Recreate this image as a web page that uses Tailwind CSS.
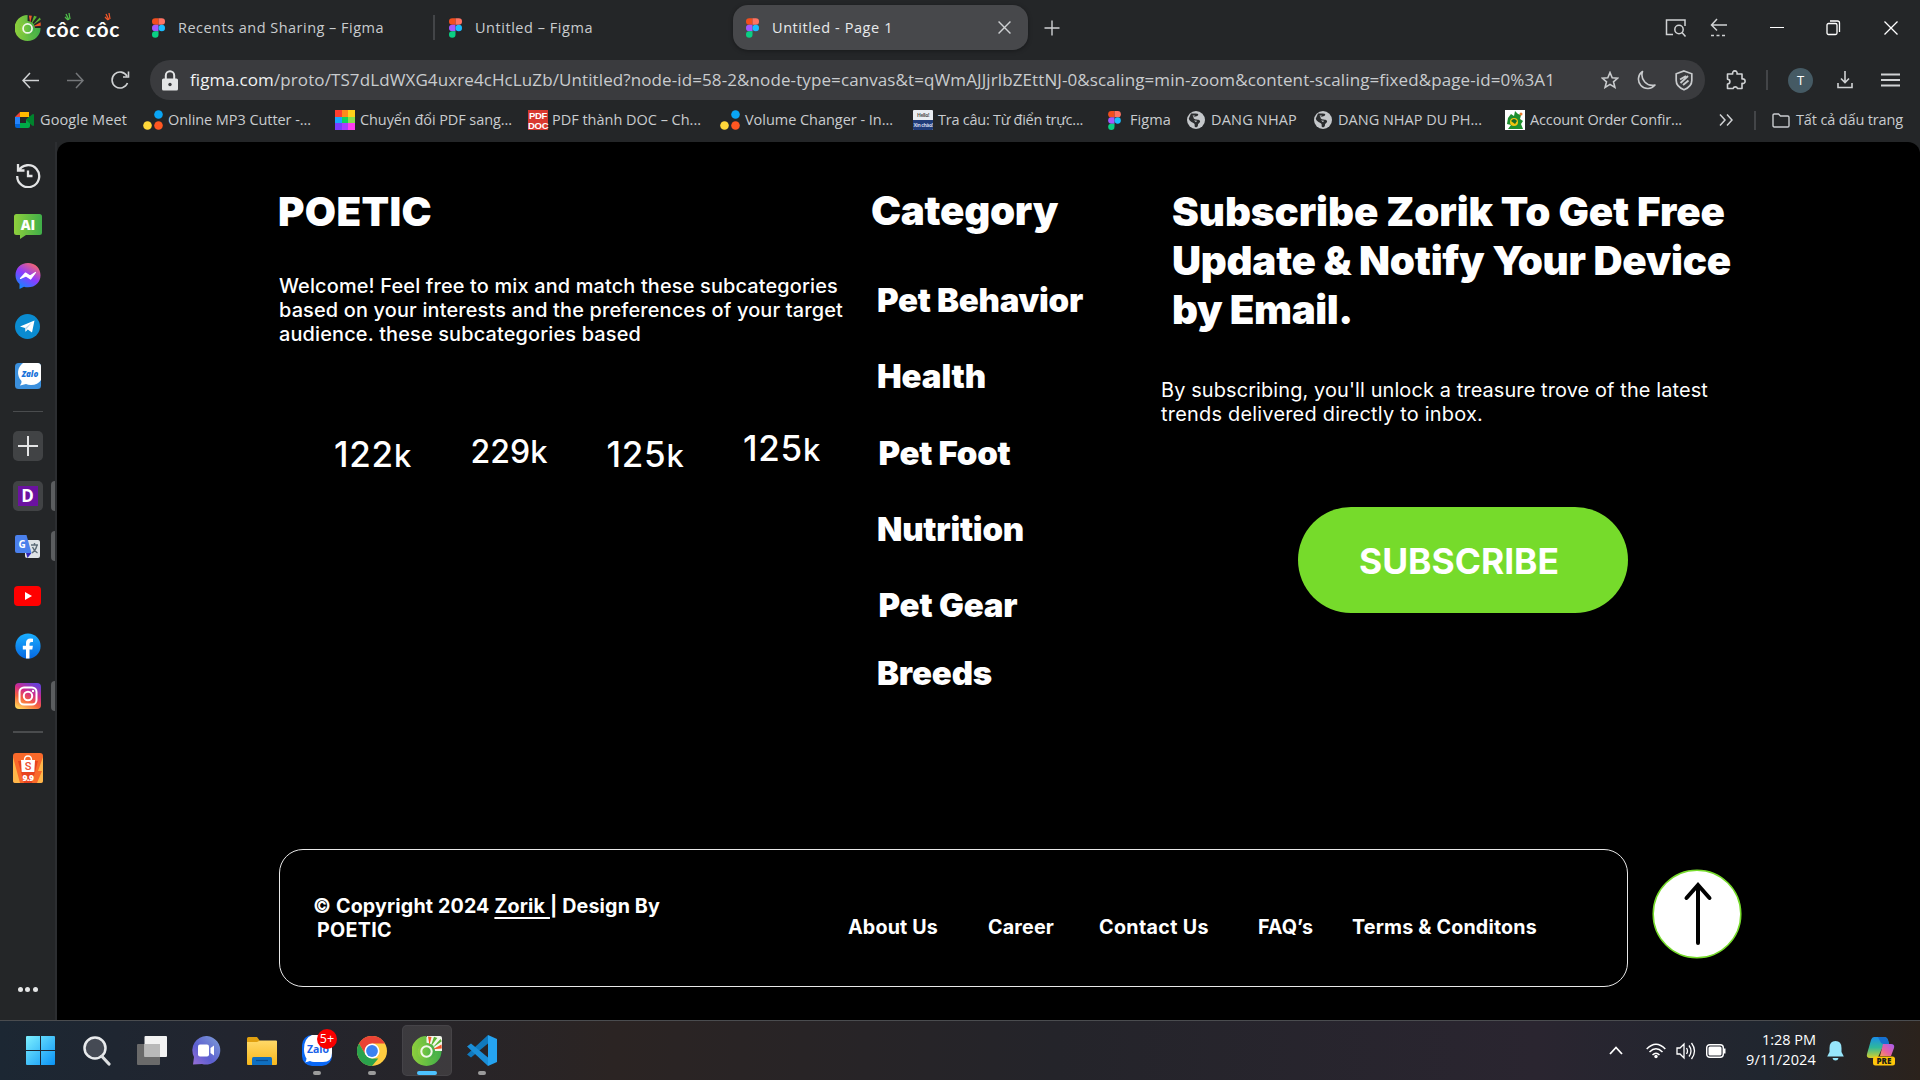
<!DOCTYPE html>
<html lang="vi">
<head>
<meta charset="utf-8">
<title>Untitled - Page 1</title>
<script src="https://cdn.jsdelivr.net/npm/@tailwindcss/browser@4"></script>
</head>
<body class="w-[1920px] h-[1080px] overflow-hidden bg-[#242628] font-['Open_Sans','Noto_Sans',sans-serif] text-[#c9cccf]">
<svg class="absolute w-0 h-0">
  <defs>
    <linearGradient id="gGreen" x1="0" y1="0" x2="1" y2="0"><stop offset="0" stop-color="#8fcf3c"/><stop offset="1" stop-color="#3fae49"/></linearGradient>
    <linearGradient id="gMsg" x1="0.2" y1="1" x2="0.8" y2="0"><stop offset="0" stop-color="#0a8bff"/><stop offset=".5" stop-color="#8c3bff"/><stop offset="1" stop-color="#ff6a64"/></linearGradient>
    <linearGradient id="gIg" x1="0.2" y1="1" x2="0.7" y2="0"><stop offset="0" stop-color="#ffd35a"/><stop offset=".35" stop-color="#f7643c"/><stop offset=".65" stop-color="#d12a8c"/><stop offset="1" stop-color="#6a3fd8"/></linearGradient>
    <linearGradient id="gFb" x1="0" y1="0" x2="0" y2="1"><stop offset="0" stop-color="#1aafff"/><stop offset="1" stop-color="#0668e2"/></linearGradient>
    <linearGradient id="gWin" x1="0" y1="0" x2="1" y2="1"><stop offset="0" stop-color="#7df0ff"/><stop offset="1" stop-color="#0a93f5"/></linearGradient>
    <linearGradient id="gChat" x1="0" y1="1" x2="1" y2="0"><stop offset="0" stop-color="#9a6fd8"/><stop offset=".4" stop-color="#5c5fd0"/><stop offset="1" stop-color="#7fa0d8"/></linearGradient>
    <linearGradient id="gFold" x1="0" y1="0" x2="0" y2="1"><stop offset="0" stop-color="#ffd968"/><stop offset="1" stop-color="#f7b71c"/></linearGradient>
    <linearGradient id="gCop" x1="0" y1="0" x2="0" y2="1"><stop offset="0" stop-color="#1a8de8"/><stop offset=".5" stop-color="#2fb89a"/><stop offset="1" stop-color="#d7cf2a"/></linearGradient>
    <linearGradient id="gCop2" x1="1" y1="0" x2="0" y2="1"><stop offset="0" stop-color="#a35df2"/><stop offset=".6" stop-color="#e8619f"/><stop offset="1" stop-color="#f79a5a"/></linearGradient>
    <symbol id="figma" viewBox="0 0 12 18"><path fill="#f24e1e" d="M3 0h3v6H3a3 3 0 0 1 0-6z"/><path fill="#ff7262" d="M6 0h3a3 3 0 0 1 0 6H6z"/><path fill="#a259ff" d="M3 6h3v6H3a3 3 0 0 1 0-6z"/><circle fill="#1abcfe" cx="9" cy="9" r="3"/><path fill="#0acf83" d="M3 12h3v3a3 3 0 1 1-3-3z"/></symbol>
    <symbol id="coccoc" viewBox="0 0 30 30"><path fill="url(#gGreen)" d="M14.500 0A15 15 0 1 0 29.500 15L22.500 15A8 8 0 1 1 14.500 7.500z"/><circle cx="14.500" cy="15.500" r="8.700" fill="url(#gGreen)"/><circle cx="14.500" cy="15.500" r="5.200" fill="none" stroke="#f2f7ea" stroke-width="2"/><path fill="#f0572a" d="M16 .5l3.500.5-2 8zM29.500 8.500l.3 4-9 .7z"/><path fill="#5cb531" d="M22 .8l3.300 1.200L18.500 11zM28.500 3l1.300 2.200-9.800 7z"/></symbol>
    <symbol id="dots3" viewBox="0 0 20 20"><circle cx="15.500" cy="4.500" r="4.300" fill="#0aa5f5"/><circle cx="4.500" cy="15.500" r="4.300" fill="#ffd83a"/><circle cx="15.500" cy="15.500" r="4.300" fill="#ff5722"/></symbol>
    <symbol id="globe" viewBox="0 0 18 18"><circle cx="9" cy="9" r="9" fill="#c4c7ca"/><path d="M4 2.500c3 0 6-.5 7 .5s-1 2.500-3 2.500-2 1.500-.5 2.500 5 0 5.500 2-2 2-2 4-1.500 2.500-2.500 2.300c-1.500-.3-.5-2-1-3.300S2 10.500 1.800 7.500z" fill="#2b2d2f"/><path d="M5.500 4.500h2.500l-1.500 1.500zM7 9.500l3 .2-1 1.500z" fill="#c4c7ca"/></symbol>
  </defs>
</svg>

<!-- Tab strip -->
<header class="h-[142px] flex flex-col">
  <div class="h-[55px] flex items-center pl-[15px] text-[14.5px]">
    <svg class="w-[26px] h-[26px] shrink-0"><use href="#coccoc"/></svg>
    <div class="relative ml-[5px] w-[75px] font-['Lato',sans-serif] font-bold text-[21px] leading-[26px] text-white whitespace-nowrap pt-[2px]"><span data-w="74">côc côc</span>
      <svg class="absolute left-[18px] -top-[1px] w-[50px] h-[8px] overflow-visible" viewBox="0 0 50 8"><path d="M2 1l3 6M5 0l1 6M1 4l3 3" stroke="#4fbf4a" stroke-width="1.300"/><path d="M42 1l3 6M45 0l1 6M41 4l3 3" stroke="#f0572a" stroke-width="1.300"/></svg>
    </div>
    <svg class="w-[13px] h-[20px] ml-[31px] shrink-0"><use href="#figma"/></svg>
    <span class="ml-[13px] w-[255px] whitespace-nowrap"><span data-w="206">Recents and Sharing – Figma</span></span>
    <i class="w-[2px] h-[25px] bg-[#434548]"></i>
    <svg class="w-[13px] h-[20px] ml-[14px] shrink-0"><use href="#figma"/></svg>
    <span class="ml-[13px] w-[258px] whitespace-nowrap"><span data-w="118">Untitled – Figma</span></span>
    <div class="w-[295px] h-[45px] rounded-[15px] bg-[#47484b] shadow-[0_1px_4px_rgba(0,0,0,.35)] flex items-center pl-[13px] text-[#e8eaec]">
      <svg class="w-[13px] h-[20px] shrink-0"><use href="#figma"/></svg>
      <span class="ml-[13px] w-[226px] whitespace-nowrap"><span data-w="121">Untitled - Page 1</span></span>
      <svg class="w-[13px] h-[13px] overflow-visible" viewBox="0 0 12 12"><path d="M.5.500l11 11M11.500.500l-11 11" stroke="#cfd1d3" stroke-width="1.300"/></svg>
    </div>
    <svg class="w-[16px] h-[16px] ml-[16px]" viewBox="0 0 16 16"><path d="M8 .5v15M.5 8h15" stroke="#cfd1d3" stroke-width="1.400"/></svg>
    <svg class="w-[22px] h-[20px] ml-[605px]" viewBox="0 0 22 20" fill="none" stroke="#d0d2d4" stroke-width="1.500"><path d="M8 16.500H1.500V2h18.500v6"/><circle cx="14" cy="11.500" r="4.200"/><path d="M17 14.500l3.500 4"/></svg>
    <svg class="w-[18px] h-[20px] ml-[23px]" viewBox="0 0 18 20" fill="none" stroke="#d0d2d4" stroke-width="1.500"><path d="M7 1L1.500 7 7 12.500M2 7h15"/><path d="M1 17.500h16" stroke-dasharray="3 2.500"/></svg>
    <i class="w-[14px] h-[1.500px] bg-white ml-[42px]"></i>
    <svg class="w-[15px] h-[16px] ml-[42px]" viewBox="0 0 15 16" fill="none" stroke="#fff" stroke-width="1.300"><rect x="1" y="3.500" width="10" height="11" rx="1.500"/><path d="M4 1h7.500q2 0 2 2v9"/></svg>
    <svg class="w-[14px] h-[14px] ml-[43px]" viewBox="0 0 14 14"><path d="M.5.500l13 13M13.500.500l-13 13" stroke="#fff" stroke-width="1.300"/></svg>
  </div>

  <!-- Navigation and address -->
  <div class="h-[50px] flex items-center pl-[22px]">
    <svg class="w-[17px] h-[17px]" viewBox="0 0 17 17" fill="none" stroke="#d0d2d4" stroke-width="1.500"><path d="M8 1L1 8.500 8 16M1 8.500h16"/></svg>
    <svg class="w-[17px] h-[17px] ml-[28px]" viewBox="0 0 17 17" fill="none" stroke="#75777a" stroke-width="1.500"><path d="M9 1l7 7.500L9 16M16 8.500H0"/></svg>
    <svg class="w-[20px] h-[20px] ml-[26px]" viewBox="0 0 20 20" fill="none" stroke="#d0d2d4" stroke-width="1.600"><path d="M17.500 13A8 8 0 1 1 17 6M18.500 1.500v5.500H13"/></svg>
    <div class="ml-[20px] w-[1555px] h-[40px] rounded-[20px] bg-[#3a3b3e] flex items-center pl-[11px]">
      <svg class="w-[18px] h-[21px]" viewBox="0 0 18 21"><path d="M4.800 9V5.500a4.200 4.200 0 0 1 8.400 0V9" fill="none" stroke="#e4e5e6" stroke-width="2"/><rect x="1" y="8.500" width="16" height="12" rx="1.500" fill="#e4e5e6"/><circle cx="9" cy="14.500" r="1.700" fill="#3a3b3e"/></svg>
      <span class="ml-[11px] w-[1415px] whitespace-nowrap text-[17px]"><span data-w="1365"><span class="text-[#f1f3f4]">figma.com</span>/proto/TS7dLdWXG4uxre4cHcLuZb/Untitled?node-id=58-2&amp;node-type=canvas&amp;t=qWmAJJjrlbZEttNJ-0&amp;scaling=min-zoom&amp;content-scaling=fixed&amp;page-id=0%3A1</span></span>
      <svg class="w-[18px] h-[18px] -ml-[4px]" viewBox="0 0 18 18" fill="none" stroke="#c9cbcd" stroke-width="1.600"><path d="M9 1.500l2.200 5.200 5.600.4-4.300 3.700 1.400 5.600L9 13.400l-4.900 3 1.400-5.600L1.200 7.100l5.600-.4z"/></svg>
      <svg class="w-[20px] h-[20px] ml-[17px]" viewBox="0 0 20 20" fill="none" stroke="#c9cbcd" stroke-width="1.600"><path d="M6.500 1.500A9.300 9.300 0 1 0 19 15 10.500 10.500 0 0 1 6.500 1.500z" stroke-linejoin="round"/></svg>
      <svg class="w-[18px] h-[21px] ml-[19px]" viewBox="0 0 18 21" fill="none" stroke="#c9cbcd" stroke-width="1.700"><path d="M9 1l7.800 2.800v6.700c0 4.500-3.500 7.500-7.800 9.300-4.300-1.800-7.800-4.800-7.800-9.300V3.800z"/><path d="M5 9.500l6-3.500M5.500 13L13 6M8 15l5.500-4.500" stroke-width="1.900"/></svg>
    </div>
    <svg class="w-[20px] h-[20px] ml-[21px]" viewBox="0 0 20 20" fill="none" stroke="#d0d2d4" stroke-width="1.600" stroke-linejoin="round"><path d="M1.500 4h5.200a2.300 2.300 0 1 1 4.300 0H16v5a2.300 2.300 0 1 1 0 4.300v5.200h-4.500a2.300 2.300 0 0 0-4.400 0H1.500V14a2.300 2.300 0 0 0 0-4.800z"/></svg>
    <i class="w-[2px] h-[20px] bg-[#434548] ml-[20px]"></i>
    <div class="w-[25px] h-[25px] rounded-full bg-[#455a64] ml-[20px] flex items-center justify-center text-white text-[13px] leading-none">T</div>
    <svg class="w-[16px] h-[18px] ml-[24px]" viewBox="0 0 16 18" fill="none" stroke="#d0d2d4" stroke-width="1.600"><path d="M8 0v11.500M4 7.500L8 11.500l4-4M1 12v4.500h14V12"/></svg>
    <svg class="w-[19px] h-[14px] ml-[28px]" viewBox="0 0 19 14"><path d="M0 1.500h19M0 7h19M0 12.500h19" stroke="#d0d2d4" stroke-width="2"/></svg>
  </div>

  <!-- Bookmarks -->
  <nav class="h-[30px] flex items-center pl-[15px] text-[14.5px] whitespace-nowrap">
    <svg class="w-[20px] h-[16px] shrink-0" viewBox="0 0 20 16"><path d="M5 0h9v5h-9z" fill="#ffba00"/><path d="M5 0v5H0z" fill="#ea4335"/><path d="M0 5h5v7H0z" fill="#2684fc"/><path d="M0 12h5v4H2q-2 0-2-2z" fill="#0066da"/><path d="M5 11h6V8l4-4v10q0 2-2 2H5z" fill="#00ac47"/><path d="M11 8l6-5.500q2-1 2 .5v10q0 1.500-2 .500z" fill="#00832d"/></svg>
    <span class="ml-[5px] w-[103px]"><span data-w="87">Google Meet</span></span>
    <svg class="w-[20px] h-[20px] shrink-0"><use href="#dots3"/></svg>
    <span class="ml-[5px] w-[167px]"><span data-w="143">Online MP3 Cutter -...</span></span>
    <div class="w-[20px] h-[20px] shrink-0 grid grid-cols-3 grid-rows-3"><i class="bg-[#ff3d2e]"></i><i class="bg-[#ff8a1a]"></i><i class="bg-[#ffd21a]"></i><i class="bg-[#1aa7ff]"></i><i class="bg-[#13d35a]"></i><i class="bg-[#8be04a]"></i><i class="bg-[#7a3dff]"></i><i class="bg-[#a93dff]"></i><i class="bg-[#ff3df0]"></i></div>
    <span class="ml-[5px] w-[168px]"><span data-w="152">Chuyển đổi PDF sang...</span></span>
    <div class="w-[20px] h-[20px] shrink-0 bg-[#d8392f] text-white font-bold font-['Liberation_Sans'] text-[9.500px] leading-[9.500px] text-center tracking-[-0.3px] pt-[1px]">PDF<br>DOC</div>
    <span class="ml-[4px] w-[168px]"><span data-w="149">PDF thành DOC – Ch...</span></span>
    <svg class="w-[20px] h-[20px] shrink-0"><use href="#dots3"/></svg>
    <span class="ml-[5px] w-[168px]"><span data-w="148">Volume Changer - In...</span></span>
    <div class="w-[20px] h-[20px] shrink-0 overflow-hidden bg-[#e9edf2] rounded-[1px] flex flex-col text-center font-bold text-[5px] leading-[10px] tracking-[-0.4px]"><span class="text-[#555]">Hello!</span><span class="bg-[#203c78] text-[#cdd6ea]">Xin chào!</span></div>
    <span class="ml-[5px] w-[170px]"><span data-w="145">Tra câu: Từ điển trực...</span></span>
    <svg class="w-[13px] h-[19px] shrink-0"><use href="#figma"/></svg>
    <span class="ml-[9px] w-[57px]"><span data-w="41">Figma</span></span>
    <svg class="w-[18px] h-[18px] shrink-0"><use href="#globe"/></svg>
    <span class="ml-[6px] w-[103px]"><span data-w="86">DANG NHAP</span></span>
    <svg class="w-[18px] h-[18px] shrink-0"><use href="#globe"/></svg>
    <span class="ml-[6px] w-[167px]"><span data-w="144">DANG NHAP DU PH...</span></span>
    <svg class="w-[20px] h-[20px] shrink-0" viewBox="0 0 20 20"><path fill="#fff" d="M0 0h20v20H0z"/><path d="M3 8l3-4 3 2 1-5 3 3 3 1-1 4 3 2-2 3 2 5H3l3-4-4-1z" fill="#1e8f2e"/><circle cx="9" cy="12" r="4" fill="#f1c40f"/><path d="M6 11q3-4 6 0l-2 3z" fill="#17692a"/><circle cx="16" cy="4" r="1.500" fill="#e8792b"/></svg>
    <span class="ml-[5px] w-[189px]"><span data-w="152">Account Order Confir...</span></span>
    <svg class="w-[14px] h-[12px] shrink-0" viewBox="0 0 14 12"><path d="M1 .5l5 5.500-5 5.500M8 .5l5 5.500-5 5.500" stroke="#d0d2d4" stroke-width="1.500" fill="none"/></svg>
    <i class="w-[2px] h-[19px] bg-[#434548] ml-[21px] shrink-0"></i>
    <svg class="w-[18px] h-[15px] ml-[16px] shrink-0" viewBox="0 0 18 15" fill="none" stroke="#c9cccf" stroke-width="1.400"><path d="M1 12.500V2.300Q1 1 2.300 1H6.500l2 2h7.200Q17 3 17 4.300v8.400Q17 14 15.700 14H2.300Q1 14 1 12.500z"/></svg>
    <span class="ml-[6px]"><span data-w="107">Tất cả dấu trang</span></span>
  </nav>
</header>

<div class="flex h-[878px]">
  <!-- Side panel -->
  <aside class="w-[57px] shrink-0 border-r-2 border-[#2c2e31] relative flex flex-col items-center pt-[8px]">
    <div class="h-[50px] flex items-center"><svg class="w-[26px] h-[26px]" viewBox="0 0 26 26" fill="none" stroke="#e3e4e5" stroke-width="2.300"><path d="M3.500 9A11 11 0 1 1 2.200 14M3 2v6.500h6.500M13 8.500V14h4.500"/></svg></div>
    <div class="h-[51px] flex items-center"><svg class="w-[28px] h-[26px]" viewBox="0 0 28 26"><path d="M2.500 1h23Q28 1 28 3.500v16q0 2.500-2.500 2.500H12l-6 4v-4H2.500Q0 22 0 19.500v-16Q0 1 2.500 1z" fill="url(#gGreen)"/><text x="14" y="16.500" text-anchor="middle" font-family="Open Sans" font-weight="800" font-size="13.500" fill="#fff">AI</text></svg></div>
    <div class="h-[50px] flex items-center"><svg class="w-[26px] h-[26px]" viewBox="0 0 26 26"><path d="M13 0C5.500 0 .5 5.300.5 12.300c0 3.700 1.500 6.500 4 8.700V26l4.500-2.200c1.200.4 2.500.5 4 .5 7.500 0 12.500-5.300 12.500-12.100S20.500 0 13 0z" fill="url(#gMsg)"/><path d="M5.500 15.500l5-5.500 4.500 3 5.500-3.500-4.800 6.500-4.700-3z" fill="#fff" stroke="#fff" stroke-width="1.200" stroke-linejoin="round"/></svg></div>
    <div class="h-[50px] flex items-center"><svg class="w-[25px] h-[25px]" viewBox="0 0 25 25"><circle cx="12.500" cy="12.500" r="12.500" fill="#0a8bd0"/><path d="M5 12.500L19.500 6.500 17 18.500l-4.200-3-2.300 2.300-.5-3.800z" fill="#fff"/><path d="M10 14l7-5.500-5.500 6.500-1 2.800z" fill="#b7d6ea"/></svg></div>
    <div class="h-[50px] flex items-center"><svg class="w-[26px] h-[26px]" viewBox="0 0 26 26"><rect width="26" height="26" rx="3.500" fill="#3b8fdc"/><path d="M8 0h14.500Q26 0 26 3.500V17q-3 5-10 5-3 0-5-1l-6 1.500q2-2 1.500-4.500C1 12 2.500 4 8 0z" fill="#fff"/><text x="15" y="13.500" text-anchor="middle" font-family="Open Sans" font-weight="800" font-style="italic" font-size="8" fill="#1a73d9">Zalo</text></svg></div>
    <div class="h-[20px] flex items-center"><i class="w-[30px] h-px bg-[#4a4c4e]"></i></div>
    <div class="h-[50px] flex items-center"><div class="w-[30px] h-[30px] rounded-[5px] bg-[#414345] flex items-center justify-center"><svg class="w-[20px] h-[20px]" viewBox="0 0 20 20"><path d="M10 0v20M0 10h20" stroke="#e4e5e6" stroke-width="2"/></svg></div></div>
    <div class="h-[50px] flex items-center"><div class="w-[30px] h-[30px] rounded-[5px] bg-[#414345] flex items-center justify-center"><div class="w-[20px] h-[20px] bg-[#6b12a0] text-white font-bold text-[17px] leading-[20px] text-center">D</div></div></div>
    <div class="h-[50px] flex items-center"><svg class="w-[25px] h-[25px]" viewBox="0 0 25 25"><rect x="10" y="6" width="15" height="18" rx="2" fill="#dfe3e6"/><path d="M2 1h9.500l5 18H2Q0 19 0 17V3Q0 1 2 1z" fill="#4a80ec"/><path d="M11 19h5.500L12.500 24z" fill="#3427b8"/><path d="M16 11h7M19.500 9v2M22 11q-1 5-5 8M17.500 13q1.500 4 5 6" stroke="#5f6d78" stroke-width="1.400" fill="none"/><text x="7" y="13.500" text-anchor="middle" font-family="Open Sans" font-weight="700" font-size="10" fill="#fff">G</text></svg></div>
    <div class="h-[50px] flex items-center"><svg class="w-[27px] h-[20px]" viewBox="0 0 27 20"><rect width="27" height="20" rx="4" fill="#f00"/><path d="M11 6v8l7-4z" fill="#fff"/></svg></div>
    <div class="h-[50px] flex items-center"><svg class="w-[26px] h-[26px]" viewBox="0 0 26 26"><circle cx="13" cy="13" r="12.600" fill="url(#gFb)"/><path d="M11 25.500V16.500H7.800v-3.700H11V10q0-4.500 4.500-4.500 1.500 0 2.500.3v3.200h-1.500q-2 0-2 1.800v2h3.400l-.6 3.700h-2.800v9z" fill="#fff"/></svg></div>
    <div class="h-[50px] flex items-center"><svg class="w-[26px] h-[26px]" viewBox="0 0 26 26"><rect width="26" height="26" rx="4" fill="url(#gIg)"/><rect x="4.500" y="4.500" width="17" height="17" rx="4.500" fill="none" stroke="#fff" stroke-width="2"/><circle cx="13" cy="13" r="4.200" fill="none" stroke="#fff" stroke-width="2"/><circle cx="18" cy="8" r="1.200" fill="#fff"/></svg></div>
    <div class="h-[22px] flex items-center"><i class="w-[30px] h-[2px] bg-[#4a4c4e]"></i></div>
    <div class="h-[50px] flex items-center"><svg class="w-[30px] h-[30px]" viewBox="0 0 30 30"><rect width="30" height="30" rx="3" fill="#f9692a"/><path d="M0 4l7 26H2Q0 30 0 28zM30 4l-5 14h4l-5 12h4q2 0 2-2z" fill="#ffb64a"/><path d="M5 8h20l-6 22h-8z" fill="#e8431f"/><path d="M11.500 7q0-4 3.500-4t3.500 4" fill="none" stroke="#fff" stroke-width="1.400"/><path d="M8 7h14l-.7 12H8.700z" fill="#fff"/><text x="15" y="16.500" text-anchor="middle" font-family="Roboto" font-weight="500" font-size="11" fill="#ee4d2d">S</text><text x="15" y="27.500" text-anchor="middle" font-family="Open Sans" font-weight="800" font-size="8.500" letter-spacing="-.5" fill="#fff">9.9</text></svg></div>
    <div class="mt-auto h-[61px] flex items-center gap-[2.500px]"><i class="w-[5px] h-[5px] rounded-full bg-[#e4e5e6]"></i><i class="w-[5px] h-[5px] rounded-full bg-[#e4e5e6]"></i><i class="w-[5px] h-[5px] rounded-full bg-[#e4e5e6]"></i></div>
    <i class="absolute right-0 top-[339px] w-[4px] h-[30px] rounded-l-[4px] bg-[#5b5d5f]"></i>
    <i class="absolute right-0 top-[389px] w-[4px] h-[30px] rounded-l-[4px] bg-[#5b5d5f]"></i>
    <i class="absolute right-0 top-[539px] w-[4px] h-[30px] rounded-l-[4px] bg-[#5b5d5f]"></i>
  </aside>

  <!-- Page -->
  <main class="w-[1863px] bg-black rounded-t-[12px] font-['Inter',sans-serif] text-white pl-[222px] whitespace-nowrap">
    <div class="flex h-[707px]">
      <section class="w-[592px] pt-[46px]">
        <h2 class="font-black text-[40.3px] leading-[48.8px] -ml-[1px]"><span data-w="154">POETIC</span></h2>
        <p class="mt-[38.500px] font-medium text-[19.900px] leading-[23.9px]"><span data-w="559">Welcome! Feel free to mix and match these subcategories</span><br><span data-w="564">based on your interests and the preferences of your target</span><br><span data-w="362">audience. these subcategories based</span></p>
        <div class="flex pl-[55px] mt-[85.500px] font-medium text-[35px] leading-[40px]">
          <span class="w-[136.5px] pt-[1px]"><span data-w="78">122<span class="text-[31px]">k</span></span></span>
          <span class="w-[136px] -mt-[1px] text-[32px]"><span data-w="77">229<span class="text-[31px]">k</span></span></span>
          <span class="w-[136.5px] pt-[1px]"><span data-w="78">125<span class="text-[31px]">k</span></span></span>
          <span class="-mt-[5px]"><span data-w="78">125<span class="text-[31px]">k</span></span></span>
        </div>
      </section>
      <section class="w-[290px] pt-[45px] font-black">
        <h2 class="text-[40.3px] leading-[48.8px]"><span data-w="187">Category</span></h2>
        <ul class="mt-[44.5px] pl-[6px] text-[33px] leading-[40px]">
          <li class="h-[76.2px]"><span data-w="206">Pet Behavior</span></li>
          <li class="h-[76.2px]"><span data-w="109">Health</span></li>
          <li class="h-[76.2px] pl-[1.500px]"><span data-w="132">Pet Foot</span></li>
          <li class="h-[76.2px]"><span data-w="147">Nutrition</span></li>
          <li class="h-[68px] pl-[1.500px]"><span data-w="139">Pet Gear</span></li>
          <li><span data-w="115">Breeds</span></li>
        </ul>
      </section>
      <section class="pt-[46px]">
        <h2 class="pl-[11px] font-black text-[40.3px] leading-[48.8px]"><span data-w="553">Subscribe Zorik To Get Free</span><br><span data-w="559">Update &amp; Notify Your Device</span><br><span data-w="181">by Email.</span></h2>
        <p class="mt-[45px] text-[19.900px] leading-[23.9px]"><span data-w="547">By subscribing, you'll unlock a treasure trove of the latest</span><br><span data-w="322">trends delivered directly to inbox.</span></p>
        <button class="block ml-[137px] mt-[79.500px] w-[330px] h-[106px] rounded-[53px] bg-[#76db2b] pr-[8px] pt-[3px] font-bold text-[35.400px]"><span data-w="200">SUBSCRIBE</span></button>
      </section>
    </div>
    <footer class="flex items-center">
      <div class="w-[1349px] h-[138px] border-[1.500px] border-[#e8e8e8] rounded-[24px] flex pl-[33px] font-bold text-[19.7px] leading-[23.9px]">
        <p class="w-[535px] pt-[45px]"><span data-w="347">© Copyright 2024 <span class="underline underline-offset-4 decoration-2">Zorik </span>| Design By</span><br><span class="inline-block pl-[4px]"><span data-w="75">POETIC</span></span></p>
        <nav class="flex pt-[65.5px]"><a class="w-[140px]"><span data-w="90">About Us</span></a><a class="w-[111px]"><span data-w="66">Career</span></a><a class="w-[159px]"><span data-w="110">Contact Us</span></a><a class="w-[94px]"><span data-w="55">FAQ’s</span></a><a><span data-w="185">Terms &amp; Conditons</span></a></nav>
      </div>
      <svg class="ml-[24px] w-[90px] h-[90px] -mt-[8px]" viewBox="0 0 90 90"><circle cx="45" cy="45" r="43.800" fill="#fff" stroke="#76db2b" stroke-width="1.500"/><path d="M46 74V17M34.500 29L46 16l11.500 13" fill="none" stroke="#000" stroke-width="4" stroke-linecap="round"/></svg>
    </footer>
  </main>
</div>

<!-- Taskbar -->
<div class="h-[60px] border-t border-[#4a4c4f] bg-[linear-gradient(90deg,#1c2733_0%,#22252f_12%,#2b2423_32%,#24242a_55%,#2a2530_80%,#20262f_92%,#2b221c_100%)] flex items-center pl-[14px] relative">
  <div class="flex">
    <div class="w-[55px] h-[50px] pr-[2px] flex items-center justify-center"><svg class="w-[29px] h-[29px]" viewBox="0 0 29 29"><path d="M1 0h13v14H0V1Q0 0 1 0zM15 0h13q1 0 1 1v13H15zM0 15h14v14H1q-1 0-1-1zM15 15h14v13q0 1-1 1H15z" fill="url(#gWin)"/></svg></div>
    <div class="w-[55px] h-[50px] flex items-center justify-center"><svg class="w-[28px] h-[30px]" viewBox="0 0 28 30"><circle cx="12" cy="12" r="10.500" fill="#454a54" stroke="#e9ebed" stroke-width="2.500"/><path d="M19 20.500l7 7.500" stroke="#dcdee0" stroke-width="3.200" stroke-linecap="round"/></svg></div>
    <div class="w-[55px] h-[50px] flex items-center justify-center"><svg class="w-[30px] h-[29px]" viewBox="0 0 30 29"><rect y="8" width="23" height="21" rx="1" fill="#6a6a6a"/><rect x="7.500" width="22.500" height="21" rx="1" fill="#f2f2f2"/><path d="M7.500 8H23v13H7.500z" fill="#b9b9b9"/></svg></div>
    <div class="w-[55px] h-[50px] flex items-center justify-center"><svg class="w-[29px] h-[29px]" viewBox="0 0 29 29"><path d="M15 0a14.300 14.300 0 1 1-5 28L1 28.500 2 21A14.300 14.300 0 0 1 15 0z" fill="url(#gChat)"/><rect x="6" y="8.500" width="11" height="12" rx="2" fill="#fff"/><path d="M18.500 12l3.500-2.500v10l-3.500-2.500z" fill="#fff"/></svg></div>
    <div class="w-[55px] h-[50px] flex items-center justify-center"><svg class="w-[30px] h-[28px]" viewBox="0 0 30 28"><path d="M0 1.500Q0 0 1.500 0H10l3 4H30v6H0z" fill="#e0a010"/><path d="M0 5h10l3-1.500h16q1 0 1 1V27q0 1-1 1H1q-1 0-1-1z" fill="url(#gFold)"/><path d="M5 28v-6.500Q5 20 6.500 20h17q1.500 0 1.500 1.500V28z" fill="#0f6fc0"/><path d="M9 23.500h12" stroke="#0a4c8c" stroke-width="1.200"/></svg></div>
    <div class="w-[55px] h-[50px] flex items-center justify-center relative"><svg class="w-[30px] h-[31px]" viewBox="0 0 30 31"><rect width="30" height="31" rx="10" fill="#0a68f5"/><path d="M10 0h10q10 0 10 10v8q0 9-9 9H12q-2 0-4-1l-5 1.500q1.500-2 1.500-4Q2 20 2 14 2 3 10 0z" fill="#fff"/><text x="16" y="17.500" text-anchor="middle" font-family="Open Sans" font-weight="700" font-size="10.500" fill="#1a62e8">Zalo</text></svg><b class="absolute left-[28px] top-[3px] w-[20px] h-[20px] rounded-full bg-[#f90000] text-white text-[12.500px] leading-[20px] text-center font-normal">5+</b><i class="absolute bottom-[1px] w-[8px] h-[4px] rounded-full bg-[#9b9b9b]"></i></div>
    <div class="w-[55px] h-[50px] flex items-center justify-center relative"><svg class="w-[30px] h-[30px]" viewBox="0 0 30 30"><circle cx="15" cy="15" r="15" fill="#ffcd40"/><path d="M2 7.500A15 15 0 0 1 28 7.500H15L8.500 18.700z" fill="#ea4335"/><path d="M2 7.500L8.600 18.800 15 22.500h6.300L15 30A15 15 0 0 1 2 7.500z" fill="#2ba24c"/><circle cx="15" cy="15" r="7.500" fill="#fff"/><circle cx="15" cy="15" r="5.900" fill="#3b82f0"/></svg><i class="absolute bottom-[1px] w-[8px] h-[4px] rounded-full bg-[#9b9b9b]"></i></div>
    <div class="w-[55px] h-[50px] flex items-center justify-center relative"><div class="w-[50px] h-[51px] shrink-0 rounded-[5px] bg-white/10 border border-white/5 flex items-center justify-center"><svg class="w-[30px] h-[30px]"><circle cx="14.500" cy="15" r="14" fill="#f3f6ec"/><path d="M15 0h13q2 0 2 2v13H15z" fill="#f3f6ec"/><use href="#coccoc"/></svg></div><i class="absolute bottom-[1px] w-[20px] h-[4px] rounded-full bg-[#4cc2ff]"></i></div>
    <div class="w-[55px] h-[50px] flex items-center justify-center relative"><svg class="w-[30px] h-[31px]" viewBox="0 0 30 31"><path d="M21 0l9 4v23l-9 4z" fill="#25a3f0"/><path d="M21 0v8.500L4 22.500 0 19.500z" fill="#1079bd"/><path d="M21 31v-8.500L4 8.500 0 11.500z" fill="#1b8fd8"/></svg><i class="absolute bottom-[1px] w-[8px] h-[4px] rounded-full bg-[#9b9b9b]"></i></div>
  </div>
  <svg class="w-[14px] h-[9px] ml-[1100px]" viewBox="0 0 14 9"><path d="M1 8l6-6.500L13 8" fill="none" stroke="#fff" stroke-width="1.800"/></svg>
  <svg class="w-[20px] h-[16px] ml-[23px]" viewBox="0 0 20 16" fill="none" stroke="#fff" stroke-width="1.500"><path d="M.7 6Q10-3.500 19.300 6M3.500 9Q10 2.500 16.500 9M6.500 12Q10 8.500 13.500 12"/><circle cx="10" cy="13.500" r="1.700" fill="#fff" stroke="none"/></svg>
  <svg class="w-[20px] h-[18px] ml-[10px]" viewBox="0 0 20 18" fill="none" stroke="#fff" stroke-width="1.300"><path d="M1 6h3l4-4v14l-4-4H1zM10.500 6q2 3 0 6M13 3.500q4 5.500 0 11M15.500 1q6 8 0 16"/></svg>
  <svg class="w-[20px] h-[14px] ml-[10px]" viewBox="0 0 20 14"><rect x=".7" y=".7" width="16.600" height="12.600" rx="3" fill="none" stroke="#fff" stroke-width="1.400"/><rect x="2.500" y="2.500" width="13" height="9" rx="1.500" fill="#fff"/><path d="M18.500 4.500v5" stroke="#fff" stroke-width="2"/></svg>
  <div class="ml-[20px] w-[70px] text-right text-white text-[14.500px] leading-[20px] whitespace-nowrap -mt-[2px]"><span data-w="54">1:28 PM</span><br><span data-w="70">9/11/2024</span></div>
  <svg class="w-[17px] h-[20px] ml-[11px]" viewBox="0 0 17 20"><path d="M8.500 0Q14.500 0 14.500 7v4l2.300 4.500H.2L2.500 11V7q0-7 6-7zM5.500 17h6q-.5 2.500-3 2.500t-3-2.500z" fill="#97e6fb"/></svg>
  <svg class="w-[30px] h-[30px] ml-[22px]" viewBox="0 0 30 30"><path d="M8 1h10q3 0 4 3l1 4h-5l-5 11q-1 3-4 3H4q-4 0-3-4L5 4q1-3 3-3z" fill="url(#gCop)"/><path d="M12 1h6q3 0 4 3l1 4h-5q-3 0-4-3z" fill="#1670d0"/><path d="M17 8h8q4 0 3 4l-3 8H14z" fill="url(#gCop2)"/><rect x="7" y="20.500" width="22" height="9" rx="2.500" fill="#ffc60a"/><text x="18" y="28" text-anchor="middle" font-family="Open Sans" font-weight="800" font-size="8" fill="#1a1a1a">PRE</text></svg>
</div>
<script>
  // Tighten or loosen labels so each one fills its data-w width.
  function fitLabels() {
    document.querySelectorAll('[data-w]').forEach(function (el) {
      el.style.letterSpacing = '0px';
      var n = el.textContent.length;
      el.style.letterSpacing = ((+el.dataset.w - el.getBoundingClientRect().width) / n).toFixed(3) + 'px';
    });
  }
  fitLabels();
  window.addEventListener('load', function () { fitLabels(); document.fonts.ready.then(fitLabels); });
</script>
</body>
</html>
